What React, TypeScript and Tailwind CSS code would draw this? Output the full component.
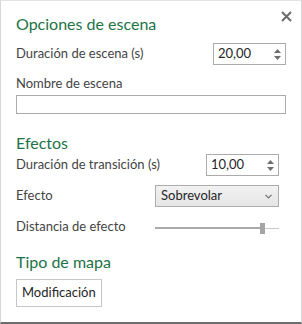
import React from 'react';

const font = { fontFamily: 'Lato, "Open Sans", "Liberation Sans", sans-serif' };

function Spinner() {
  return (
    <div className="flex flex-col items-center gap-[3px] pr-[4px]">
      <svg width="7" height="4" viewBox="0 0 7 4">
        <path d="M3.5 0 L7 4 L0 4 Z" fill="#6e6e6e" />
      </svg>
      <svg width="7" height="4" viewBox="0 0 7 4">
        <path d="M0 0 L7 0 L3.5 4 Z" fill="#6e6e6e" />
      </svg>
    </div>
  );
}

function NumberBox({ value }: { value: string }) {
  return (
    <div className="flex h-[22px] w-[73px] items-center justify-between border border-[#ababab] bg-white pl-[4px] text-[13px] text-[#262626]">
      <span>{value}</span>
      <Spinner />
    </div>
  );
}

function Heading({ children, className = '' }: { children: React.ReactNode; className?: string }) {
  return <div className={`text-[16px] font-normal leading-[22px] text-[#217346] ${className}`}>{children}</div>;
}

export default function App() {
  return (
    <div
      className="relative h-[324px] w-[302px] border-x border-t border-b-2 border-x-[#d6d6d6] border-t-[#e3e3e3] border-b-[#6d6d6d] bg-white text-[13px] text-[#444]"
      style={font}
    >
      <button className="absolute right-[9px] top-[10px] p-0">
        <svg width="11" height="11" viewBox="0 0 11 11">
          <path d="M1 1 L10 10 M10 1 L1 10" stroke="#6a6a6a" strokeWidth="2" />
        </svg>
      </button>

      <div className="flex flex-col pl-[15px] pr-[15px] pt-[12px]">
        <Heading>Opciones de escena</Heading>

        <div className="mt-[8px] flex items-center justify-between">
          <span>Duración de escena (s)</span>
          <NumberBox value="20,00" />
        </div>

        <div className="mt-[9px] leading-[18px]">Nombre de escena</div>
        <div className="mt-[3px] h-[19px] w-full border border-[#ababab] bg-white" />

        <Heading className="mt-[18px]">Efectos</Heading>

        <div className="mr-[7px] mt-0 flex items-center justify-between">
          <span>Duración de transición (s)</span>
          <NumberBox value="10,00" />
        </div>

        <div className="mr-[7px] mt-[9px] flex items-center justify-between">
          <span>Efecto</span>
          <div className="flex h-[22px] w-[124px] items-center justify-between border border-[#acacac] bg-gradient-to-b from-[#f2f2f2] to-[#e5e5e5] pl-[5px] pr-[6px] text-[13px] text-[#262626]">
            <span>Sobrevolar</span>
            <svg width="7" height="5" viewBox="0 0 7 5">
              <path d="M0.5 0.8 L3.5 3.8 L6.5 0.8" stroke="#6e6e6e" strokeWidth="1.2" fill="none" />
            </svg>
          </div>
        </div>

        <div className="mr-[7px] mt-[10px] flex items-center justify-between">
          <span className="leading-[18px]">Distancia de efecto</span>
          <div className="relative mt-[4px] flex h-[11px] w-[124px] items-center">
            <div className="h-[2px] w-[108px] bg-[#a9a9a9]" />
            <div className="h-[1px] flex-1 bg-[#c8c8c8]" />
            <div className="absolute left-[105px] top-0 h-[11px] w-[5px] bg-[#a4a4a4]" />
          </div>
        </div>

        <Heading className="mt-[16px]">Tipo de mapa</Heading>

        <div className="mt-[6px]">
          <button className="h-[28px] border border-[#c6c6c6] bg-white px-[5px] text-[13px] text-[#262626]">
            Modificación
          </button>
        </div>
      </div>
    </div>
  );
}
